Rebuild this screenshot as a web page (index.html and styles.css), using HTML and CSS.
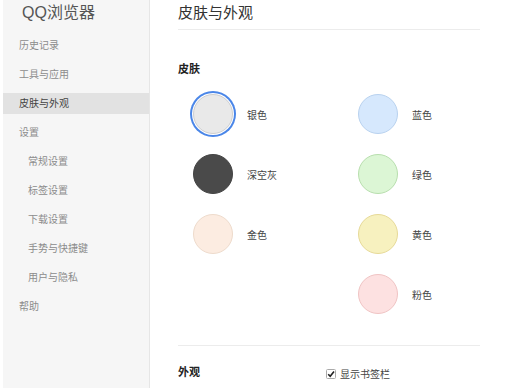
FILE: index.html
```html
<!DOCTYPE html>
<html lang="zh-CN">
<head>
    <meta charset="UTF-8">
    <title>QQ浏览器 - 皮肤与外观</title>
    <link rel="stylesheet" href="styles.css">
</head>
<body>
    <div class="page">
        <aside class="sidebar">
            <h1 class="brand">QQ浏览器</h1>
            <ul class="nav">
                <li>历史记录</li>
                <li>工具与应用</li>
                <li class="active">皮肤与外观</li>
                <li>设置</li>
                <li class="sub">常规设置</li>
                <li class="sub">标签设置</li>
                <li class="sub">下载设置</li>
                <li class="sub">手势与快捷键</li>
                <li class="sub">用户与隐私</li>
                <li>帮助</li>
            </ul>
        </aside>

        <main class="main">
            <h2 class="page-title">皮肤与外观</h2>

            <section class="section">
                <h3 class="section-title">皮肤</h3>
                <div class="skins">
                    <div class="skin"><span class="dot silver selected"></span><span>银色</span></div>
                    <div class="skin"><span class="dot blue"></span><span>蓝色</span></div>
                    <div class="skin"><span class="dot dark"></span><span>深空灰</span></div>
                    <div class="skin"><span class="dot green"></span><span>绿色</span></div>
                    <div class="skin"><span class="dot gold"></span><span>金色</span></div>
                    <div class="skin"><span class="dot yellow"></span><span>黄色</span></div>
                    <div class="skin col2"><span class="dot pink"></span><span>粉色</span></div>
                </div>
            </section>

            <section class="section look">
                <h3 class="section-title">外观</h3>
                <label class="check">
                    <svg width="10" height="10" viewBox="0 0 10 10">
                        <rect x="0.5" y="0.5" width="9" height="9" rx="1" fill="#fff" stroke="#aaa"/>
                        <path d="M2.2 5.2 L4.2 7.2 L8 2.4" fill="none" stroke="#222" stroke-width="1.6"/>
                    </svg>
                    <span>显示书签栏</span>
                </label>
            </section>
        </main>
    </div>
</body>
</html>
```

FILE: styles.css
```css
body {
    margin: 0;
    background: #fff;
    font-family: "Liberation Sans", "Noto Sans CJK SC", sans-serif;
    color: #333;
}
.page {
    display: flex;
    height: 388px;
    overflow: hidden;
}
.sidebar {
    width: 146px;
    margin-left: 3px;
    background: #f6f6f6;
    border-right: 1px solid #e6e6e6;
    flex-shrink: 0;
}
.brand {
    margin: 0;
    padding: 3px 0 0 19px;
    height: 30px;
    box-sizing: border-box;
    font-size: 16px;
    line-height: 20px;
    font-weight: normal;
    color: #555;
}
.nav {
    list-style: none;
    margin: 0;
    padding: 5px 0 0;
}
.nav li {
    height: 21px;
    line-height: 21px;
    margin-bottom: 8px;
    padding-left: 16px;
    font-size: 10px;
    color: #8c8c8c;
}
.nav li.sub {
    padding-left: 25px;
}
.nav li.active {
    background: #e2e2e2;
    color: #444;
}
.main {
    flex: 1;
    padding-left: 28px;
}
.page-title {
    margin: 0;
    width: 302px;
    padding: 3px 0 6px;
    line-height: 20px;
    font-size: 15px;
    font-weight: normal;
    color: #333;
    border-bottom: 1px solid #ececec;
}
.section-title {
    margin: 0;
    font-size: 11px;
    line-height: 16px;
    font-weight: bold;
    color: #222;
}
.section {
    padding-top: 31px;
}
.skins {
    display: grid;
    grid-template-columns: 165px 140px;
    grid-auto-rows: 60px;
    padding: 7px 0 0 15px;
}
.skin {
    display: flex;
    align-items: center;
    gap: 14px;
    font-size: 10px;
    color: #444;
}
.skin.col2 {
    grid-column: 2;
}
.dot {
    width: 40px;
    height: 40px;
    box-sizing: border-box;
    border-radius: 50%;
    border: 1px solid #d4d4d4;
}
.dot.selected {
    box-shadow: 0 0 0 1px #fff, 0 0 0 3px #4a86e8;
}
.silver { background: #e9e9e9; border-color: #cfcfcf; }
.dark { background: #4a4a4a; border-color: #444; }
.gold { background: #fcece1; border-color: #eedbcc; }
.blue { background: #d6e8fd; border-color: #b9d2ef; }
.green { background: #dcf6d5; border-color: #b8dfae; }
.yellow { background: #f7f1bf; border-color: #e7da98; }
.pink { background: #fde1e1; border-color: #f0c4c4; }
.look {
    width: 302px;
    margin-top: 21px;
    padding-top: 16px;
    border-top: 1px solid #ececec;
    display: grid;
    grid-template-columns: 148px auto;
    align-items: center;
}
.check {
    display: flex;
    align-items: center;
    gap: 4px;
    font-size: 10px;
    color: #444;
    padding-top: 4px;
}
```
